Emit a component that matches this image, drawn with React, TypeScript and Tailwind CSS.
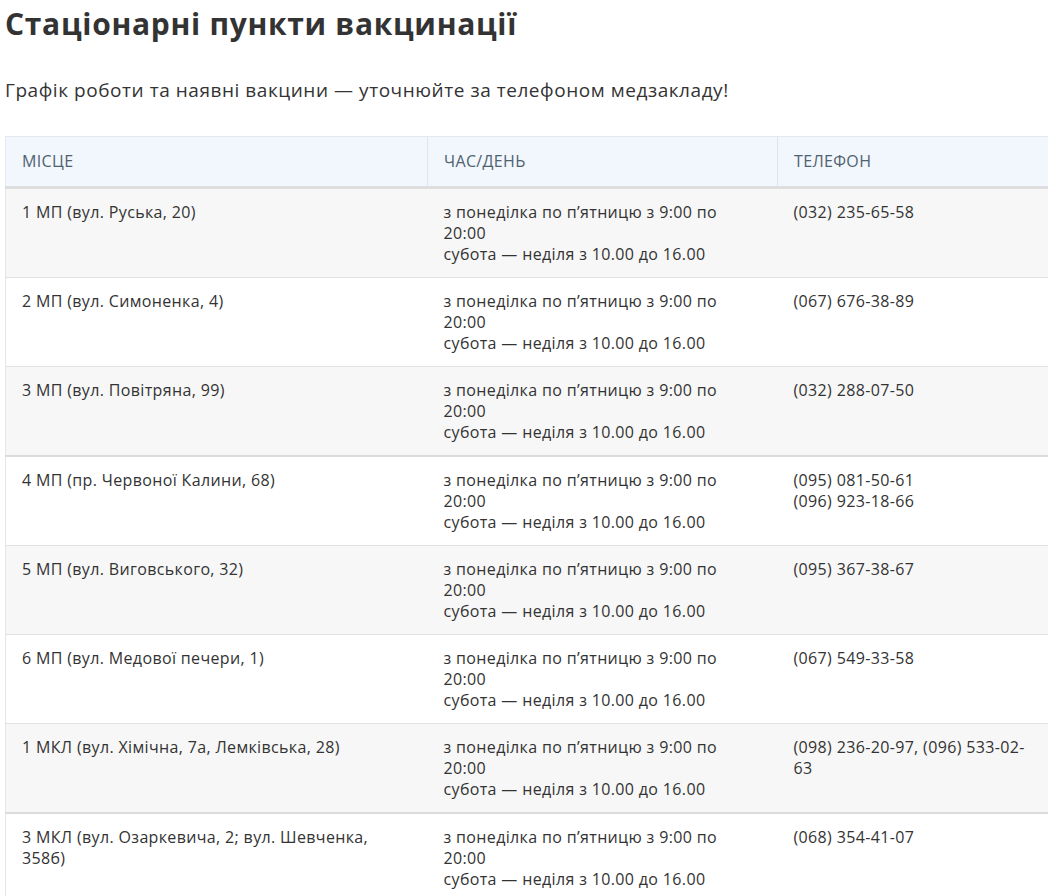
import React from 'react';

interface Row {
	place: string[];
	phone: string[];
	thick?: boolean;
}

const rows: Row[] = [
	{ place: ['1 МП (вул. Руська, 20)'], phone: ['(032) 235-65-58'] },
	{ place: ['2 МП (вул. Симоненка, 4)'], phone: ['(067) 676-38-89'] },
	{ place: ['3 МП (вул. Повітряна, 99)'], phone: ['(032) 288-07-50'], thick: true },
	{ place: ['4 МП (пр. Червоної Калини, 68)'], phone: ['(095) 081-50-61', '(096) 923-18-66'] },
	{ place: ['5 МП (вул. Виговського, 32)'], phone: ['(095) 367-38-67'] },
	{ place: ['6 МП (вул. Медової печери, 1)'], phone: ['(067) 549-33-58'] },
	{ place: ['1 МКЛ (вул. Хімічна, 7а, Лемківська, 28)'], phone: ['(098) 236-20-97, (096) 533-02-', '63'], thick: true },
	{ place: ['3 МКЛ (вул. Озаркевича, 2; вул. Шевченка,', '358б)'], phone: ['(068) 354-41-07'] },
];

// schedule is the same for every point
const hours = ['з понеділка по п’ятницю з 9:00 по', '20:00', 'субота — неділя з 10.00 до 16.00'];

const Lines: React.FC<{ lines: string[] }> = ({ lines }) => (
	<>
		{lines.map((l, i) => (
			<span key={i} className="block whitespace-nowrap">{l}</span>
		))}
	</>
);

export default function App() {
	return (
		<div className="min-h-screen bg-white pl-[5px] text-[#333] font-['Open_Sans','Noto_Sans',sans-serif]">
			<h1 className="pt-[4px] text-[30px] font-bold leading-[40px] tracking-[0.7px] text-[#333]">Стаціонарні пункти вакцинації</h1>
			<p className="mt-[33px] text-[19px] leading-[26px] tracking-[0.55px] text-[#333]">Графік роботи та наявні вакцини — уточнюйте за телефоном медзакладу!</p>

			<table className="mt-[33px] w-[1043px] table-fixed border-collapse text-[16px] leading-[21px] tracking-[0.35px]">
				<colgroup>
					<col className="w-[422px]" />
					<col className="w-[350px]" />
					<col className="w-[271px]" />
				</colgroup>
				<thead>
					<tr className="h-[51px] border-t border-l border-[#e6e9ec] border-b-[3px] border-b-[#dedede] bg-[#f1f7fc] text-left text-[#506170]">
						<th className="px-4 font-normal">МІСЦЕ</th>
						<th className="border-l border-[#dde6ee] px-4 font-normal">ЧАС/ДЕНЬ</th>
						<th className="border-l border-[#dde6ee] px-4 font-normal">ТЕЛЕФОН</th>
					</tr>
				</thead>
				<tbody>
					{rows.map((r, i) => (
						<tr
							key={i}
							className={`h-[89px] border-l border-[#e6e6e6] align-top ${i % 2 === 0 ? 'bg-[#f7f7f7]' : 'bg-white'} ${r.thick ? 'border-b-2 border-b-[#dcdcdc]' : 'border-b border-b-[#e2e2e2]'}`}
						>
							<td className="px-4 pt-[13px] pb-[12px]"><Lines lines={r.place} /></td>
							<td className="px-4 pt-[13px] pb-[12px]"><Lines lines={hours} /></td>
							<td className="px-4 pt-[13px] pb-[12px]"><Lines lines={r.phone} /></td>
						</tr>
					))}
				</tbody>
			</table>
		</div>
	);
}
